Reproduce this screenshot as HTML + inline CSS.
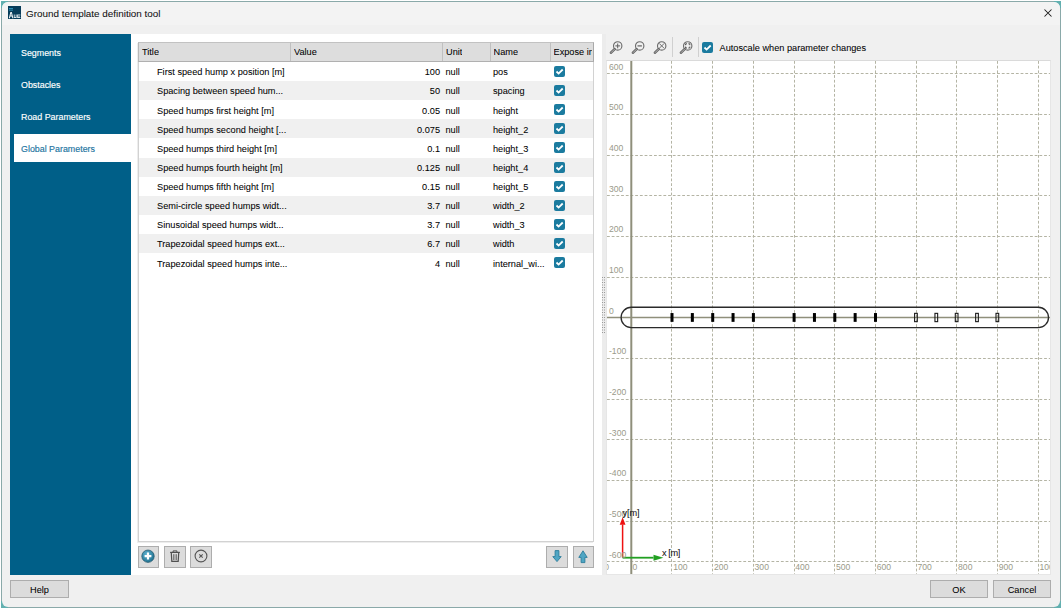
<!DOCTYPE html>
<html><head><meta charset="utf-8">
<style>
*{box-sizing:border-box;margin:0;padding:0}
html,body{width:1062px;height:610px;overflow:hidden;background:#fff;font-family:"Liberation Sans",sans-serif;position:relative}
.abs{position:absolute}
#frame{position:absolute;left:1px;top:1px;width:1060px;height:607px;background:#62b0b0;}
#win{position:absolute;left:2px;top:2px;width:1058px;height:605px;background:#f0f0f0;border-radius:6px;overflow:hidden}
.t{position:absolute;white-space:nowrap;font-size:9.2px;color:#000;line-height:12px;-webkit-text-stroke:0.1px rgba(0,0,0,0.5)}
.title{left:26px;top:7.8px;font-size:9.9px;color:#111}
#nav{position:absolute;left:10px;top:34px;width:121px;height:541px;background:#005f88}
.navi{position:absolute;left:21px;color:#fff;font-size:8.9px;line-height:12px;white-space:nowrap;-webkit-text-stroke:0.15px #fff}
.navi.sel{color:#2274a0;-webkit-text-stroke:0.15px #2274a0}
#sel{position:absolute;left:14px;top:134px;width:117px;height:28px;background:#fff}
#tpanel{position:absolute;left:131px;top:34px;width:471px;height:541px;background:#fff}
#table{position:absolute;left:138px;top:42px;width:456px;height:500px;border:1px solid #d2d2d2;background:#fff;box-shadow:-1px 1px 0 #ededed}
#thead{position:absolute;left:138px;top:42px;width:456px;height:20px;background:#dddddd;border:1px solid #b8b8b8;border-top-color:#c2c2c2;border-right-color:#a9a9a9;border-bottom:1px solid #b0b0b0}
.sep{position:absolute;top:43px;width:1px;height:18px;background:#c0c0c0}
.hd{overflow:hidden}
.row{position:absolute;left:139px;width:454px;height:19.1px}
.g{background:#f0f0f0}
.btn{position:absolute;background:#dcdcdc;border:1px solid #adadad}
.bt{text-align:center}
#plot{position:absolute;left:606px;top:60px;width:445px;height:515px;background:#fff;overflow:hidden;border:1px solid #e6e6e6;border-top-color:#dadada}
.lbl{position:absolute;font-size:8.6px;color:#9a9a8a;line-height:10px;white-space:nowrap}

</style></head><body>
<div id="frame"></div>
<div class="abs" style="left:8px;top:1px;width:1046px;height:1px;background:#8aa9a9"></div><div class="abs" style="left:8px;top:607px;width:1046px;height:1px;background:#8aa9a9"></div><div class="abs" style="left:1px;top:8px;width:1px;height:593px;background:#8aa9a9"></div><div class="abs" style="left:1060px;top:8px;width:1px;height:593px;background:#8aa9a9"></div><div id="win"></div>
<div class="abs" style="left:2px;top:2px;width:1058px;height:23px;background:#f3f3f3;border-radius:6px 6px 0 0"></div>
<svg class="abs" style="left:8px;top:6px" width="13" height="13" viewBox="0 0 13 13">
<rect width="13" height="13" fill="#073c5a"/>
<rect x="1" y="2" width="4" height="1" fill="#2f8fb5"/><rect x="1" y="3.6" width="4" height="1" fill="#2f8fb5"/>
<path d="M0.8 12.2L2.4 6H3.8L5.4 12.2H4.3L3.9 10.6H2.3L1.9 12.2Z M2.55 9.6H3.65L3.1 7.3Z" fill="#f2f5f7"/>
<path d="M5.8 8.6H6.7V11H7.7V8.6H8.6V11.9H5.8Z" fill="#d8e2e8"/>
<path d="M9.1 8.6H12.3V9.4H10V9.9H12V10.6H10V11.1H12.3V11.9H9.1Z" fill="#d8e2e8"/>
</svg>
<div class="t title">Ground template definition tool</div>
<svg class="abs" style="left:1044px;top:9px" width="8" height="8" viewBox="0 0 8 8"><path d="M0.5 0.5L7.5 7.5M7.5 0.5L0.5 7.5" stroke="#1a1a1a" stroke-width="1.05"/></svg>
<div id="nav"></div>
<div id="tpanel"></div>
<div id="sel"></div>
<div class="navi" style="top:47px">Segments</div>
<div class="navi" style="top:79px">Obstacles</div>
<div class="navi" style="top:111px">Road Parameters</div>
<div class="navi sel" style="top:143px">Global Parameters</div>
<div id="table"></div>
<div class="row" style="top:62.00px"></div>
<div class="t" style="left:157px;top:66.30px">First speed hump x position [m]</div>
<div class="t" style="right:622px;top:66.30px">100</div>
<div class="t" style="left:445.5px;top:66.30px">null</div>
<div class="t" style="left:493px;top:66.30px">pos</div>
<svg class="abs" style="left:554px;top:66.00px" width="11" height="11" viewBox="0 0 11 11"><rect width="11" height="11" rx="2" fill="#1b7b9f"/><path d="M2.5 5.5L4.6 7.6L8.7 3.5" stroke="#fff" stroke-width="1.8" fill="none"/></svg>
<div class="row g" style="top:81.12px"></div>
<div class="t" style="left:157px;top:85.42px">Spacing between speed hum...</div>
<div class="t" style="right:622px;top:85.42px">50</div>
<div class="t" style="left:445.5px;top:85.42px">null</div>
<div class="t" style="left:493px;top:85.42px">spacing</div>
<svg class="abs" style="left:554px;top:85.12px" width="11" height="11" viewBox="0 0 11 11"><rect width="11" height="11" rx="2" fill="#1b7b9f"/><path d="M2.5 5.5L4.6 7.6L8.7 3.5" stroke="#fff" stroke-width="1.8" fill="none"/></svg>
<div class="row" style="top:100.24px"></div>
<div class="t" style="left:157px;top:104.54px">Speed humps first height [m]</div>
<div class="t" style="right:622px;top:104.54px">0.05</div>
<div class="t" style="left:445.5px;top:104.54px">null</div>
<div class="t" style="left:493px;top:104.54px">height</div>
<svg class="abs" style="left:554px;top:104.24px" width="11" height="11" viewBox="0 0 11 11"><rect width="11" height="11" rx="2" fill="#1b7b9f"/><path d="M2.5 5.5L4.6 7.6L8.7 3.5" stroke="#fff" stroke-width="1.8" fill="none"/></svg>
<div class="row g" style="top:119.36px"></div>
<div class="t" style="left:157px;top:123.66px">Speed humps second height [...</div>
<div class="t" style="right:622px;top:123.66px">0.075</div>
<div class="t" style="left:445.5px;top:123.66px">null</div>
<div class="t" style="left:493px;top:123.66px">height_2</div>
<svg class="abs" style="left:554px;top:123.36px" width="11" height="11" viewBox="0 0 11 11"><rect width="11" height="11" rx="2" fill="#1b7b9f"/><path d="M2.5 5.5L4.6 7.6L8.7 3.5" stroke="#fff" stroke-width="1.8" fill="none"/></svg>
<div class="row" style="top:138.48px"></div>
<div class="t" style="left:157px;top:142.78px">Speed humps third height [m]</div>
<div class="t" style="right:622px;top:142.78px">0.1</div>
<div class="t" style="left:445.5px;top:142.78px">null</div>
<div class="t" style="left:493px;top:142.78px">height_3</div>
<svg class="abs" style="left:554px;top:142.48px" width="11" height="11" viewBox="0 0 11 11"><rect width="11" height="11" rx="2" fill="#1b7b9f"/><path d="M2.5 5.5L4.6 7.6L8.7 3.5" stroke="#fff" stroke-width="1.8" fill="none"/></svg>
<div class="row g" style="top:157.60px"></div>
<div class="t" style="left:157px;top:161.90px">Speed humps fourth height [m]</div>
<div class="t" style="right:622px;top:161.90px">0.125</div>
<div class="t" style="left:445.5px;top:161.90px">null</div>
<div class="t" style="left:493px;top:161.90px">height_4</div>
<svg class="abs" style="left:554px;top:161.60px" width="11" height="11" viewBox="0 0 11 11"><rect width="11" height="11" rx="2" fill="#1b7b9f"/><path d="M2.5 5.5L4.6 7.6L8.7 3.5" stroke="#fff" stroke-width="1.8" fill="none"/></svg>
<div class="row" style="top:176.72px"></div>
<div class="t" style="left:157px;top:181.02px">Speed humps fifth height [m]</div>
<div class="t" style="right:622px;top:181.02px">0.15</div>
<div class="t" style="left:445.5px;top:181.02px">null</div>
<div class="t" style="left:493px;top:181.02px">height_5</div>
<svg class="abs" style="left:554px;top:180.72px" width="11" height="11" viewBox="0 0 11 11"><rect width="11" height="11" rx="2" fill="#1b7b9f"/><path d="M2.5 5.5L4.6 7.6L8.7 3.5" stroke="#fff" stroke-width="1.8" fill="none"/></svg>
<div class="row g" style="top:195.84px"></div>
<div class="t" style="left:157px;top:200.14px">Semi-circle speed humps widt...</div>
<div class="t" style="right:622px;top:200.14px">3.7</div>
<div class="t" style="left:445.5px;top:200.14px">null</div>
<div class="t" style="left:493px;top:200.14px">width_2</div>
<svg class="abs" style="left:554px;top:199.84px" width="11" height="11" viewBox="0 0 11 11"><rect width="11" height="11" rx="2" fill="#1b7b9f"/><path d="M2.5 5.5L4.6 7.6L8.7 3.5" stroke="#fff" stroke-width="1.8" fill="none"/></svg>
<div class="row" style="top:214.96px"></div>
<div class="t" style="left:157px;top:219.26px">Sinusoidal speed humps widt...</div>
<div class="t" style="right:622px;top:219.26px">3.7</div>
<div class="t" style="left:445.5px;top:219.26px">null</div>
<div class="t" style="left:493px;top:219.26px">width_3</div>
<svg class="abs" style="left:554px;top:218.96px" width="11" height="11" viewBox="0 0 11 11"><rect width="11" height="11" rx="2" fill="#1b7b9f"/><path d="M2.5 5.5L4.6 7.6L8.7 3.5" stroke="#fff" stroke-width="1.8" fill="none"/></svg>
<div class="row g" style="top:234.08px"></div>
<div class="t" style="left:157px;top:238.38px">Trapezoidal speed humps ext...</div>
<div class="t" style="right:622px;top:238.38px">6.7</div>
<div class="t" style="left:445.5px;top:238.38px">null</div>
<div class="t" style="left:493px;top:238.38px">width</div>
<svg class="abs" style="left:554px;top:238.08px" width="11" height="11" viewBox="0 0 11 11"><rect width="11" height="11" rx="2" fill="#1b7b9f"/><path d="M2.5 5.5L4.6 7.6L8.7 3.5" stroke="#fff" stroke-width="1.8" fill="none"/></svg>
<div class="row" style="top:253.20px"></div>
<div class="t" style="left:157px;top:257.50px">Trapezoidal speed humps inte...</div>
<div class="t" style="right:622px;top:257.50px">4</div>
<div class="t" style="left:445.5px;top:257.50px">null</div>
<div class="t" style="left:493px;top:257.50px">internal_wi...</div>
<svg class="abs" style="left:554px;top:257.20px" width="11" height="11" viewBox="0 0 11 11"><rect width="11" height="11" rx="2" fill="#1b7b9f"/><path d="M2.5 5.5L4.6 7.6L8.7 3.5" stroke="#fff" stroke-width="1.8" fill="none"/></svg>
<div id="thead"></div>
<div class="sep" style="left:290px"></div>
<div class="sep" style="left:442px"></div>
<div class="sep" style="left:490px"></div>
<div class="sep" style="left:550px"></div>
<div class="t hd" style="left:142px;top:46px">Title</div>
<div class="t hd" style="left:294px;top:46px">Value</div>
<div class="t hd" style="left:446px;top:46px">Unit</div>
<div class="t hd" style="left:493.5px;top:46px">Name</div>
<div class="t hd" style="left:553.5px;top:46px;width:38px">Expose in dynamics</div>
<div class="btn" style="left:138px;top:546px;width:21px;height:22px"></div>
<div class="btn" style="left:164px;top:546px;width:22px;height:22px"></div>
<div class="btn" style="left:190px;top:546px;width:22px;height:22px"></div>
<div class="btn" style="left:546px;top:546px;width:22px;height:22px"></div>
<div class="btn" style="left:573px;top:546px;width:21px;height:22px"></div>
<svg class="abs" style="left:140px;top:547.8px" width="16" height="16" viewBox="0 0 16 16">
<defs><radialGradient id="pg" cx="0.4" cy="0.35" r="0.7"><stop offset="0" stop-color="#5fb2cf"/><stop offset="1" stop-color="#1d6f8e"/></radialGradient></defs>
<circle cx="8" cy="8.2" r="6.2" fill="url(#pg)" stroke="#25566a" stroke-width="0.7"/>
<path d="M8 4.6V11.6M4.6 8.1H11.4" stroke="#fff" stroke-width="2.2"/>
</svg>
<svg class="abs" style="left:167px;top:548px" width="16" height="16" viewBox="0 0 16 16">
<path d="M3.1 4.4H12.9" stroke="#505050" stroke-width="1.2"/>
<path d="M6.1 4.3V2.9H9.9V4.3" stroke="#505050" stroke-width="1" fill="none"/>
<path d="M4.3 4.9L4.8 13.4H11.2L11.7 4.9" stroke="#505050" stroke-width="1.2" fill="none"/>
<path d="M6.5 6.2V12.1M8 6.2V12.1M9.5 6.2V12.1" stroke="#666" stroke-width="0.8"/>
</svg>
<svg class="abs" style="left:192.6px;top:548.3px" width="16" height="16" viewBox="0 0 16 16">
<circle cx="8" cy="8" r="5.9" stroke="#555" stroke-width="1.1" fill="none"/>
<path d="M6.3 6.3L9.7 9.7M9.7 6.3L6.3 9.7" stroke="#555" stroke-width="1.1"/>
</svg>
<svg class="abs" style="left:549px;top:549px" width="16" height="16" viewBox="0 0 16 16">
<path d="M6.1 1.6H9.9V7.6H12.2L8 12.6L3.8 7.6H6.1Z" fill="#4fa6c4" stroke="#2a7d9c" stroke-width="0.9" stroke-linejoin="round"/>
</svg>
<svg class="abs" style="left:575px;top:549px" width="16" height="16" viewBox="0 0 16 16">
<path d="M6.1 13.6H9.9V8.4H12.2L8 1.8L3.8 8.4H6.1Z" fill="#4fa6c4" stroke="#2a7d9c" stroke-width="0.9" stroke-linejoin="round"/>
</svg>
<div class="btn" style="left:10px;top:580px;width:59px;height:18px"></div>
<div class="t bt" style="left:10px;width:59px;top:584px">Help</div>
<div class="btn" style="left:930px;top:580px;width:58px;height:18px"></div>
<div class="t bt" style="left:930px;width:58px;top:584px">OK</div>
<div class="btn" style="left:993px;top:580px;width:58px;height:18px"></div>
<div class="t bt" style="left:993px;width:58px;top:584px">Cancel</div>
<div class="abs" style="left:602px;top:34px;width:4px;height:541px;background:#ececec"></div>
<svg class="abs" style="left:602px;top:277px" width="3" height="58" fill="#999"><rect x="0" y="0.0" width="1" height="1"/><rect x="2" y="0.0" width="1" height="1"/><rect x="0" y="2.5" width="1" height="1"/><rect x="2" y="2.5" width="1" height="1"/><rect x="0" y="5.0" width="1" height="1"/><rect x="2" y="5.0" width="1" height="1"/><rect x="0" y="7.5" width="1" height="1"/><rect x="2" y="7.5" width="1" height="1"/><rect x="0" y="10.0" width="1" height="1"/><rect x="2" y="10.0" width="1" height="1"/><rect x="0" y="12.5" width="1" height="1"/><rect x="2" y="12.5" width="1" height="1"/><rect x="0" y="15.0" width="1" height="1"/><rect x="2" y="15.0" width="1" height="1"/><rect x="0" y="17.5" width="1" height="1"/><rect x="2" y="17.5" width="1" height="1"/><rect x="0" y="20.0" width="1" height="1"/><rect x="2" y="20.0" width="1" height="1"/><rect x="0" y="22.5" width="1" height="1"/><rect x="2" y="22.5" width="1" height="1"/><rect x="0" y="25.0" width="1" height="1"/><rect x="2" y="25.0" width="1" height="1"/><rect x="0" y="27.5" width="1" height="1"/><rect x="2" y="27.5" width="1" height="1"/><rect x="0" y="30.0" width="1" height="1"/><rect x="2" y="30.0" width="1" height="1"/><rect x="0" y="32.5" width="1" height="1"/><rect x="2" y="32.5" width="1" height="1"/><rect x="0" y="35.0" width="1" height="1"/><rect x="2" y="35.0" width="1" height="1"/><rect x="0" y="37.5" width="1" height="1"/><rect x="2" y="37.5" width="1" height="1"/><rect x="0" y="40.0" width="1" height="1"/><rect x="2" y="40.0" width="1" height="1"/><rect x="0" y="42.5" width="1" height="1"/><rect x="2" y="42.5" width="1" height="1"/><rect x="0" y="45.0" width="1" height="1"/><rect x="2" y="45.0" width="1" height="1"/><rect x="0" y="47.5" width="1" height="1"/><rect x="2" y="47.5" width="1" height="1"/><rect x="0" y="50.0" width="1" height="1"/><rect x="2" y="50.0" width="1" height="1"/><rect x="0" y="52.5" width="1" height="1"/><rect x="2" y="52.5" width="1" height="1"/><rect x="0" y="55.0" width="1" height="1"/><rect x="2" y="55.0" width="1" height="1"/></svg>
<svg class="abs" style="left:608px;top:38px" width="16" height="16" viewBox="0 0 16 16">
<circle cx="9.7" cy="7.9" r="4.2" stroke="#6a6a6a" stroke-width="1.1" fill="none"/>
<path d="M6.6 11.1L3.0 14.7" stroke="#666" stroke-width="2.6" stroke-linecap="round"/>
<path d="M6.4 11.3L3.2 14.5" stroke="#c8c8c8" stroke-width="0.8" stroke-linecap="round"/>
<path d="M9.7 5.5V10.3M7.3 7.9H12.1" stroke="#606060" stroke-width="1"/></svg>
<svg class="abs" style="left:629.5px;top:38px" width="16" height="16" viewBox="0 0 16 16">
<circle cx="9.7" cy="7.9" r="4.2" stroke="#6a6a6a" stroke-width="1.1" fill="none"/>
<path d="M6.6 11.1L3.0 14.7" stroke="#666" stroke-width="2.6" stroke-linecap="round"/>
<path d="M6.4 11.3L3.2 14.5" stroke="#c8c8c8" stroke-width="0.8" stroke-linecap="round"/>
<path d="M7.5 7.9H11.9" stroke="#606060" stroke-width="1.2"/></svg>
<svg class="abs" style="left:651.5px;top:38px" width="16" height="16" viewBox="0 0 16 16">
<circle cx="9.7" cy="7.9" r="4.2" stroke="#6a6a6a" stroke-width="1.1" fill="none"/>
<path d="M6.6 11.1L3.0 14.7" stroke="#666" stroke-width="2.6" stroke-linecap="round"/>
<path d="M6.4 11.3L3.2 14.5" stroke="#c8c8c8" stroke-width="0.8" stroke-linecap="round"/>
<path d="M7.2 5.4L12.2 10.4M12.2 5.4L7.2 10.4" stroke="#606060" stroke-width="0.9"/></svg>
<div class="abs" style="left:672px;top:37px;width:1px;height:20px;background:#d0d0d0"></div>
<svg class="abs" style="left:677.5px;top:38px" width="16" height="16" viewBox="0 0 16 16">
<circle cx="9.7" cy="7.9" r="4.2" stroke="#6a6a6a" stroke-width="1.1" fill="none"/>
<path d="M6.6 11.1L3.0 14.7" stroke="#666" stroke-width="2.6" stroke-linecap="round"/>
<path d="M6.4 11.3L3.2 14.5" stroke="#c8c8c8" stroke-width="0.8" stroke-linecap="round"/>
<path d="M7.6 7.2V5.8H9M10.4 5.8H11.8V7.2M11.8 8.6V10H10.4M9 10H7.6V8.6" stroke="#505050" stroke-width="1" fill="none"/></svg>
<div class="abs" style="left:698px;top:37px;width:1px;height:20px;background:#d0d0d0"></div>
<svg class="abs" style="left:702px;top:42px" width="11" height="11" viewBox="0 0 11 11"><rect width="11" height="11" rx="2" fill="#1b7b9f"/><path d="M2.5 5.5L4.6 7.6L8.7 3.5" stroke="#fff" stroke-width="1.8" fill="none"/></svg>
<div class="t" style="left:719.5px;top:41.8px">Autoscale when parameter changes</div>
<div id="plot"><svg width="443" height="513" style="position:absolute;left:0;top:0"><line x1="0" y1="500.5" x2="443" y2="500.5" stroke="#b4b4a4" stroke-width="1" stroke-dasharray="2.8 1.9"/><line x1="0" y1="460.5" x2="443" y2="460.5" stroke="#b4b4a4" stroke-width="1" stroke-dasharray="2.8 1.9"/><line x1="0" y1="419.5" x2="443" y2="419.5" stroke="#b4b4a4" stroke-width="1" stroke-dasharray="2.8 1.9"/><line x1="0" y1="378.5" x2="443" y2="378.5" stroke="#b4b4a4" stroke-width="1" stroke-dasharray="2.8 1.9"/><line x1="0" y1="338.5" x2="443" y2="338.5" stroke="#b4b4a4" stroke-width="1" stroke-dasharray="2.8 1.9"/><line x1="0" y1="297.5" x2="443" y2="297.5" stroke="#b4b4a4" stroke-width="1" stroke-dasharray="2.8 1.9"/><line x1="0" y1="216.5" x2="443" y2="216.5" stroke="#b4b4a4" stroke-width="1" stroke-dasharray="2.8 1.9"/><line x1="0" y1="175.5" x2="443" y2="175.5" stroke="#b4b4a4" stroke-width="1" stroke-dasharray="2.8 1.9"/><line x1="0" y1="134.5" x2="443" y2="134.5" stroke="#b4b4a4" stroke-width="1" stroke-dasharray="2.8 1.9"/><line x1="0" y1="94.5" x2="443" y2="94.5" stroke="#b4b4a4" stroke-width="1" stroke-dasharray="2.8 1.9"/><line x1="0" y1="53.5" x2="443" y2="53.5" stroke="#b4b4a4" stroke-width="1" stroke-dasharray="2.8 1.9"/><line x1="0" y1="12.5" x2="443" y2="12.5" stroke="#b4b4a4" stroke-width="1" stroke-dasharray="2.8 1.9"/><line x1="64.5" y1="0" x2="64.5" y2="513" stroke="#b4b4a4" stroke-width="1" stroke-dasharray="2.8 1.9"/><line x1="105.5" y1="0" x2="105.5" y2="513" stroke="#b4b4a4" stroke-width="1" stroke-dasharray="2.8 1.9"/><line x1="146.5" y1="0" x2="146.5" y2="513" stroke="#b4b4a4" stroke-width="1" stroke-dasharray="2.8 1.9"/><line x1="187.5" y1="0" x2="187.5" y2="513" stroke="#b4b4a4" stroke-width="1" stroke-dasharray="2.8 1.9"/><line x1="227.5" y1="0" x2="227.5" y2="513" stroke="#b4b4a4" stroke-width="1" stroke-dasharray="2.8 1.9"/><line x1="268.5" y1="0" x2="268.5" y2="513" stroke="#b4b4a4" stroke-width="1" stroke-dasharray="2.8 1.9"/><line x1="309.5" y1="0" x2="309.5" y2="513" stroke="#b4b4a4" stroke-width="1" stroke-dasharray="2.8 1.9"/><line x1="349.5" y1="0" x2="349.5" y2="513" stroke="#b4b4a4" stroke-width="1" stroke-dasharray="2.8 1.9"/><line x1="390.5" y1="0" x2="390.5" y2="513" stroke="#b4b4a4" stroke-width="1" stroke-dasharray="2.8 1.9"/><line x1="431.5" y1="0" x2="431.5" y2="513" stroke="#b4b4a4" stroke-width="1" stroke-dasharray="2.8 1.9"/><line x1="24.30" y1="0" x2="24.30" y2="513" stroke="#8f8f7b" stroke-width="2"/><line x1="0" y1="256.45" x2="443" y2="256.45" stroke="#8f8f7b" stroke-width="1.6"/><path d="M24.30 246.25H431.30A10.2 10.2 0 0 1 431.30 266.65H24.30A10.2 10.2 0 0 1 24.30 246.25Z" fill="none" stroke="#2a2a2a" stroke-width="1.3"/><rect x="63.50" y="252.05" width="3" height="8.8" fill="#000"/><rect x="185.60" y="252.05" width="3" height="8.8" fill="#000"/><rect x="307.60" y="252.35" width="2.7" height="8.3" fill="none" stroke="#1a1a1a" stroke-width="1.1"/><rect x="83.85" y="252.05" width="3" height="8.8" fill="#000"/><rect x="205.95" y="252.05" width="3" height="8.8" fill="#000"/><rect x="327.95" y="252.35" width="2.7" height="8.3" fill="none" stroke="#1a1a1a" stroke-width="1.1"/><rect x="104.20" y="252.05" width="3" height="8.8" fill="#000"/><rect x="226.30" y="252.05" width="3" height="8.8" fill="#000"/><rect x="348.30" y="252.35" width="2.7" height="8.3" fill="none" stroke="#1a1a1a" stroke-width="1.1"/><rect x="124.55" y="252.05" width="3" height="8.8" fill="#000"/><rect x="246.65" y="252.05" width="3" height="8.8" fill="#000"/><rect x="368.65" y="252.35" width="2.7" height="8.3" fill="none" stroke="#1a1a1a" stroke-width="1.1"/><rect x="144.90" y="252.05" width="3" height="8.8" fill="#000"/><rect x="267.00" y="252.05" width="3" height="8.8" fill="#000"/><rect x="389.00" y="252.35" width="2.7" height="8.3" fill="none" stroke="#1a1a1a" stroke-width="1.1"/><line x1="15.600000000000023" y1="496.70000000000005" x2="15.600000000000023" y2="463.6" stroke="#ee1111" stroke-width="1.5"/><path d="M12.700000000000022 463.79999999999995L15.600000000000023 456.20000000000005L18.50000000000002 463.79999999999995Z" fill="#ee1111"/><line x1="15.600000000000023" y1="496.70000000000005" x2="46.5" y2="496.70000000000005" stroke="#22a022" stroke-width="1.8"/><path d="M46.5 493.70000000000005L56.39999999999998 496.70000000000005L46.5 499.70000000000005Z" fill="#22a022"/></svg>
<div class="lbl" style="left:2px;top:488.61px">-600</div>
<div class="lbl" style="left:2px;top:447.95px">-500</div>
<div class="lbl" style="left:2px;top:407.29px">-400</div>
<div class="lbl" style="left:2px;top:366.63px">-300</div>
<div class="lbl" style="left:2px;top:325.97px">-200</div>
<div class="lbl" style="left:2px;top:285.31px">-100</div>
<div class="lbl" style="left:2px;top:244.65px">0</div>
<div class="lbl" style="left:2px;top:203.99px">100</div>
<div class="lbl" style="left:2px;top:163.33px">200</div>
<div class="lbl" style="left:2px;top:122.67px">300</div>
<div class="lbl" style="left:2px;top:82.01px">400</div>
<div class="lbl" style="left:2px;top:41.35px">500</div>
<div class="lbl" style="left:2px;top:0.69px">600</div>
<div class="lbl" style="left:-15.20px;top:501.01px">-100</div>
<div class="lbl" style="left:25.50px;top:501.01px">0</div>
<div class="lbl" style="left:66.20px;top:501.01px">100</div>
<div class="lbl" style="left:106.90px;top:501.01px">200</div>
<div class="lbl" style="left:147.60px;top:501.01px">300</div>
<div class="lbl" style="left:188.30px;top:501.01px">400</div>
<div class="lbl" style="left:229.00px;top:501.01px">500</div>
<div class="lbl" style="left:269.70px;top:501.01px">600</div>
<div class="lbl" style="left:310.40px;top:501.01px">700</div>
<div class="lbl" style="left:351.10px;top:501.01px">800</div>
<div class="lbl" style="left:391.80px;top:501.01px">900</div>
<div class="lbl" style="left:432.50px;top:501.01px">1000</div>
<div class="t" style="left:15.6px;top:446px;color:#111;letter-spacing:-0.1px">y[m]</div>
<div class="t" style="left:55.0px;top:486px;color:#111;letter-spacing:-0.4px">x [m]</div>
</div>
</body></html>
